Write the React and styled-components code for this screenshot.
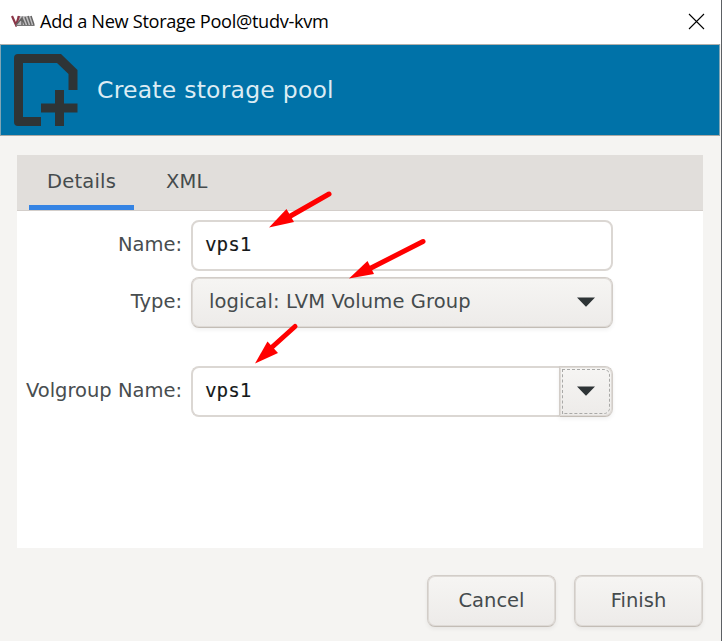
import React from "react";
import styled, { createGlobalStyle } from "styled-components";

const Global = createGlobalStyle`
  * { box-sizing: border-box; }
  html, body { margin: 0; width: 722px; height: 641px; overflow: hidden; background: #f5f4f2; }
  button, input { font: inherit; letter-spacing: inherit; margin: 0; }
`;

const Window = styled.main`
  position: relative;
  width: 722px;
  height: 641px;
  overflow: hidden;
  display: flex;
  flex-direction: column;
  background: #f5f4f2;
  border-right: 1px solid #5c6064;
  font-family: "DejaVu Sans", sans-serif;
  font-size: 19.5px;
  color: #484d4f;
`;

const TitleBar = styled.header`
  height: 44px;
  flex: none;
  display: flex;
  align-items: center;
  padding: 0 16px 2px 11px;
  background: #fff;
`;

const Title = styled.h1`
  margin: 0 auto 0 5px;
  font: 400 18.2px "Open Sans", sans-serif;
  letter-spacing: ${(p) => p.$spacing};
  color: #000;
  white-space: nowrap;
`;

const CloseButton = styled.button`
  display: flex;
  padding: 0;
  border: 0;
  background: none;
`;

const Banner = styled.section`
  height: 92px;
  flex: none;
  display: flex;
  align-items: center;
  gap: 19px;
  width: 720px;
  padding: 0 0 0 13px;
  background: #0072a8;
  border: 1px solid #7fa5b5;
  border-top-color: #b1b0ac;
  border-bottom-color: #aaa9a5;
`;

const BannerTitle = styled.h2`
  margin: 0;
  font-weight: 400;
  font-size: 23.5px;
  letter-spacing: 0.23px;
  color: #dcecf4;
`;

const Notebook = styled.section`
  width: 686px;
  height: 393px;
  flex: none;
  margin: 19px 0 0 17px;
  background: #fff;
`;

const Tabs = styled.nav`
  display: flex;
  height: 55.5px;
  padding-left: 12px;
  background: #e1dedb;
  border-bottom: 1px solid #d3ceca;
`;

const Tab = styled.button`
  height: 55px;
  padding: 0 18px 2px;
  border: 0;
  background: none;
  color: #454b4d;
  letter-spacing: 0.2px;
  box-shadow: ${(p) => (p.$active ? "inset 0 -5px #3584e4" : "none")};
  & + & { margin-left: 14px; }
`;

const Form = styled.form`
  display: grid;
  grid-template-columns: 165px 422px;
  column-gap: 9px;
  grid-template-rows: 51px 51px 51px;
  row-gap: ${(p) => p.$gap}px;
  padding-top: 9px;
`;

const Label = styled.label`
  display: flex;
  align-items: center;
  justify-content: flex-end;
  padding-bottom: 2px;
  white-space: nowrap;
  ${(p) => p.$spaced && "margin-top: 31px; margin-bottom: -31px;"}
`;

const Entry = styled.input`
  width: 100%;
  height: 51px;
  padding: 0 12px 1px;
  border: 2px solid #dbd7d3;
  border-radius: 8px;
  background: #fff;
  color: #16191a;
  outline: 0;
  &&& { font-family: "DejaVu Sans Mono", monospace; font-size: 19.3px; -webkit-text-stroke: 0.12px #16191a; }
`;

const raised = `
  border: 1px solid #d2cdc8;
  border-bottom-color: #c3bdb6;
  border-radius: 8px;
  background: linear-gradient(#f6f5f3, #edebe9);
  box-shadow: 0 2px 4px rgba(0, 0, 0, 0.06), inset 0 0 0 1px #dedad6;
`;

const Combo = styled.button`
  ${raised}
  display: flex;
  align-items: center;
  justify-content: space-between;
  height: 51px;
  padding: 0 17px 2px;
  color: #454b4d;
  letter-spacing: 0.1px;
`;

const EditableCombo = styled.div`
  display: flex;
  height: 51px;
  margin-top: 31px;
  ${Entry} { width: 368px; border-right: 0; border-radius: 8px 0 0 8px; }
`;

const DropButton = styled.button`
  ${raised}
  width: 54px;
  height: 51px;
  padding: 2px;
  border-radius: 0 8px 8px 0;
`;

const FocusRing = styled.span`
  display: flex;
  align-items: center;
  justify-content: center;
  width: 100%;
  height: 100%;
  border: 1px dashed #a9a9a7;
  border-radius: 0 6px 6px 0;
`;

const Actions = styled.footer`
  display: flex;
  justify-content: flex-end;
  gap: 18px;
  padding: 27px 18px 0 0;
`;

const ActionButton = styled.button`
  ${raised}
  width: 129px;
  height: 52px;
  padding: 0 0 2px;
  color: #454b4d;
`;

const Annotations = styled.svg`
  position: absolute;
  inset: 0;
  pointer-events: none;
`;

const Logo = () => (
  <svg width="24" height="12" viewBox="0 0 24 12" aria-hidden="true">
    <path d="M6 1H20L23.5 11H7Z" fill="#c2c0c2" />
    <path d="M1 1L5 10L8 1" fill="none" stroke="#8c3547" strokeWidth="2.2" />
    <path d="M5 10L11 3V10M11 3L14 10M14 2L17 10M17 1L20 10M20 1L23 10" fill="none" stroke="#656565" strokeWidth="1.5" />
    <path d="M5 10.5H23.5" stroke="#777" />
  </svg>
);

const NewDocumentIcon = () => (
  <svg width="64" height="72" viewBox="0 0 64 72" aria-hidden="true">
    <path d="M4 0H47L63.5 16V36H54.5V20L43 9H9V63H27V72H4Q0 72 0 68V4Q0 0 4 0Z" fill="#2e3436" />
    <path d="M41 36H50V49.5H63.5V58.5H50V72H41V58.5H27V49.5H41Z" fill="#2e3436" />
  </svg>
);

const Caret = () => (
  <svg width="18" height="10" viewBox="0 0 18 10" aria-hidden="true">
    <path d="M0 .5H18L9.8 9Q9 10 8.2 9Z" fill="#2e3436" />
  </svg>
);

const arrows = [
  { shaft: "M329 194L287 218", head: "M269 227.5L286.5 209L294 222Z" },
  { shaft: "M423 241.5L369 269", head: "M349 278.5L367.5 261L374 274Z" },
  { shaft: "M295 326.5L270 349", head: "M255 363.5L267.5 341.5L278 353Z" },
];

export default function App() {
  return (
    <>
      <Global />
      <Window>
        <TitleBar>
          <Logo />
          <Title $spacing="-0.33px">Add a New Storage Pool@tudv-kvm</Title>
          <CloseButton aria-label="Close">
            <svg width="17" height="17" viewBox="0 0 17 17">
              <path d="M1 1L16 16M16 1L1 16" stroke="#000" strokeWidth="1.1" />
            </svg>
          </CloseButton>
        </TitleBar>
        <Banner>
          <NewDocumentIcon />
          <BannerTitle>Create storage pool</BannerTitle>
        </Banner>
        <Notebook>
          <Tabs>
            <Tab $active>Details</Tab>
            <Tab>XML</Tab>
          </Tabs>
          <Form $gap={6.5}>
            <Label htmlFor="name">Name:</Label>
            <Entry id="name" defaultValue="vps1" />
            <Label>Type:</Label>
            <Combo type="button">
              logical: LVM Volume Group
              <Caret />
            </Combo>
            <Label htmlFor="volgroup" $spaced>Volgroup Name:</Label>
            <EditableCombo>
              <Entry id="volgroup" defaultValue="vps1" />
              <DropButton type="button" aria-label="Choose volume group">
                <FocusRing><Caret /></FocusRing>
              </DropButton>
            </EditableCombo>
          </Form>
        </Notebook>
        <Actions>
          <ActionButton>Cancel</ActionButton>
          <ActionButton>Finish</ActionButton>
        </Actions>
        <Annotations width="722" height="641" viewBox="0 0 722 641">
          {arrows.map((a) => (
            <g key={a.shaft}>
              <path d={a.shaft} stroke="#f00" strokeWidth="5" strokeLinecap="round" />
              <path d={a.head} fill="#f00" />
            </g>
          ))}
        </Annotations>
      </Window>
    </>
  );
}
